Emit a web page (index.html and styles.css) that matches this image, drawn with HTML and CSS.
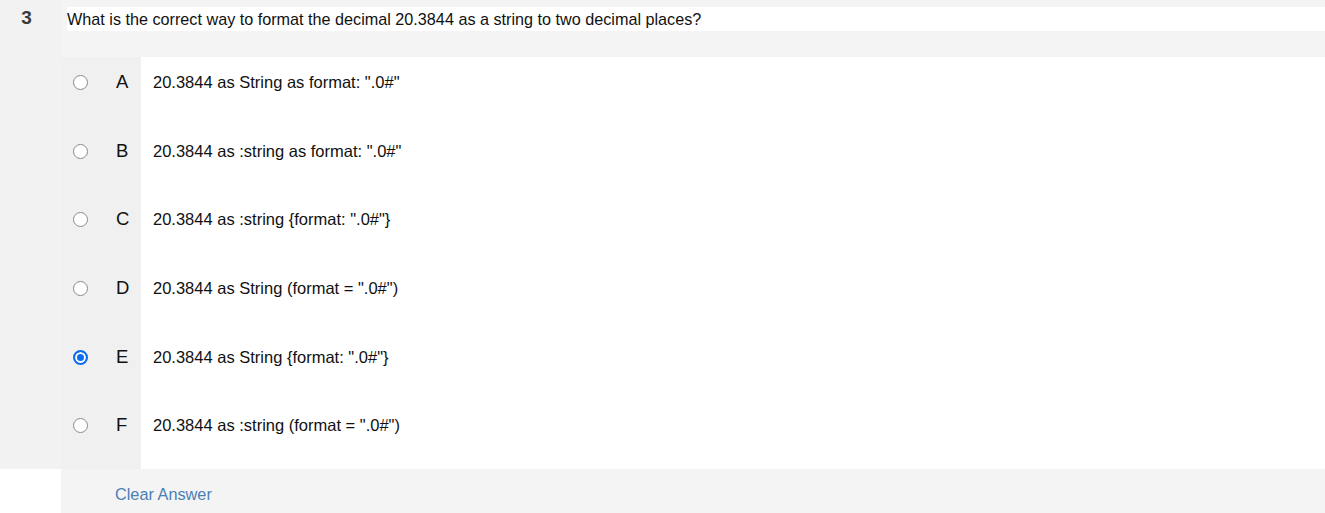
FILE: index.html
```html
<!DOCTYPE html>
<html>
<head>
<meta charset="utf-8">
<link rel="stylesheet" href="styles.css">
</head>
<body>
<div class="question">
  <div class="qmain">
    <div class="qnum">3</div>
    <div class="qcontent">
      <div class="qhead">
        <div class="qtext">What is the correct way to format the decimal 20.3844 as a string to two decimal places?</div>
      </div>
      <div class="options">
        <label class="opt"><span class="ctrl"><input type="radio" name="q3"><span class="letter">A</span></span><span class="otext">20.3844 as String as format: ".0#"</span></label>
        <label class="opt"><span class="ctrl"><input type="radio" name="q3"><span class="letter">B</span></span><span class="otext">20.3844 as :string as format: ".0#"</span></label>
        <label class="opt"><span class="ctrl"><input type="radio" name="q3"><span class="letter">C</span></span><span class="otext">20.3844 as :string {format: ".0#"}</span></label>
        <label class="opt"><span class="ctrl"><input type="radio" name="q3"><span class="letter">D</span></span><span class="otext">20.3844 as String (format = ".0#")</span></label>
        <label class="opt"><span class="ctrl"><input type="radio" name="q3" checked><span class="letter">E</span></span><span class="otext">20.3844 as String {format: ".0#"}</span></label>
        <label class="opt"><span class="ctrl"><input type="radio" name="q3"><span class="letter">F</span></span><span class="otext">20.3844 as :string (format = ".0#")</span></label>
      </div>
    </div>
  </div>
  <div class="qfoot">
    <div class="spacer"></div>
    <div class="footer"><a class="clear" href="#">Clear Answer</a></div>
  </div>
</div>
</body>
</html>
```

FILE: styles.css
```css
html, body {
  margin: 0;
  padding: 0;
  background: #ffffff;
  font-family: "Liberation Sans", Arial, sans-serif;
  color: #111;
}
.question {
  width: 1325px;
}
.qmain {
  display: flex;
}
.qnum {
  width: 61px;
  flex: none;
  background: #f2f2f2;
  font-weight: bold;
  font-size: 19px;
  color: #3a3a3a;
  text-align: center;
  padding-top: 7px;
  box-sizing: border-box;
  padding-right: 8px;
  line-height: 22px;
}
.qcontent {
  flex: 1;
  display: flex;
  flex-direction: column;
}
.qhead {
  background: #f4f4f4;
  padding: 7px 0 26px 6px;
}
.qtext {
  background: #fff;
  height: 24px;
  line-height: 24px;
  font-size: 16.2px;
  color: #111;
}
.options {
  display: flex;
  flex-direction: column;
}
.opt {
  display: flex;
  height: 68.67px;
}
.ctrl {
  width: 80px;
  flex: none;
  background: #f0f0f0;
  display: flex;
  align-items: flex-start;
  padding-top: 16px;
  box-sizing: border-box;
}
.ctrl input {
  -webkit-appearance: none;
  appearance: none;
  margin: 2px 0 0 12px;
  width: 15px;
  height: 15px;
  border: 1px solid #8a8a8a;
  border-radius: 50%;
  background: #fff;
  box-sizing: border-box;
}
.ctrl input:checked {
  border: 2px solid #0a6cf0;
  background: #0a6cf0;
  box-shadow: inset 0 0 0 2px #fff;
}
.letter {
  margin-left: 28px;
  font-size: 18.5px;
  line-height: 18px;
  color: #111;
}
.otext {
  padding: 16px 0 0 12px;
  font-size: 16.5px;
  line-height: 18px;
  color: #111;
}
.qfoot {
  display: flex;
}
.spacer {
  width: 61px;
  flex: none;
}
.footer {
  flex: 1;
  background: #f4f4f4;
  height: 44px;
  padding-left: 54px;
  line-height: 50px;
}
.clear {
  color: #4a7fb6;
  text-decoration: none;
  font-size: 16.3px;
}
```
